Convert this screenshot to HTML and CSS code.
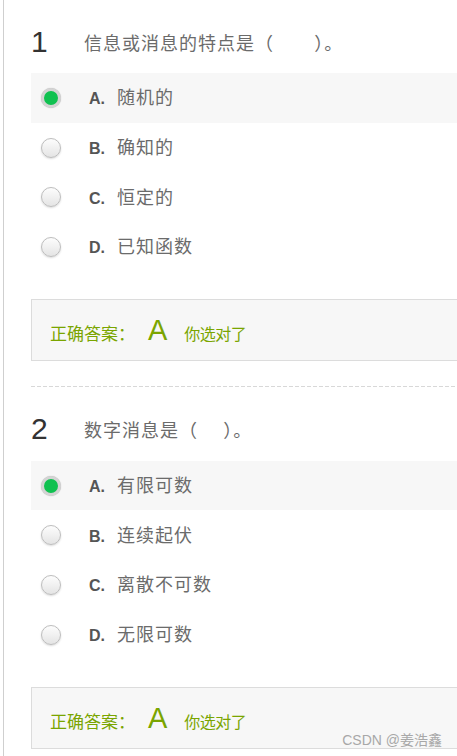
FILE: index.html
```html
<!DOCTYPE html>
<html lang="zh-CN">
<head>
<meta charset="utf-8">
<title>题目</title>
<link rel="stylesheet" href="styles.css">
</head>
<body>
<div class="page">
  <section class="question q1">
    <div class="q-head">
      <span class="q-num">1</span>
      <span class="q-text">信息或消息的特点是（&nbsp;&nbsp;&nbsp;&nbsp;&nbsp;&nbsp;&nbsp;&nbsp;）。</span>
    </div>
    <ul class="options">
      <li class="option selected"><span class="radio"></span><span class="opt-label"><span class="opt-key">A.</span><span class="opt-text">随机的</span></span></li>
      <li class="option"><span class="radio"></span><span class="opt-label"><span class="opt-key">B.</span><span class="opt-text">确知的</span></span></li>
      <li class="option"><span class="radio"></span><span class="opt-label"><span class="opt-key">C.</span><span class="opt-text">恒定的</span></span></li>
      <li class="option"><span class="radio"></span><span class="opt-label"><span class="opt-key">D.</span><span class="opt-text">已知函数</span></span></li>
    </ul>
    <div class="answer">
      <span class="ans-label">正确答案：</span><span class="ans-key">A</span><span class="ans-note">你选对了</span>
    </div>
  </section>
  <div class="divider"></div>
  <section class="question q2">
    <div class="q-head">
      <span class="q-num">2</span>
      <span class="q-text">数字消息是（&nbsp;&nbsp;&nbsp;&nbsp;&nbsp;）。</span>
    </div>
    <ul class="options">
      <li class="option selected"><span class="radio"></span><span class="opt-label"><span class="opt-key">A.</span><span class="opt-text">有限可数</span></span></li>
      <li class="option"><span class="radio"></span><span class="opt-label"><span class="opt-key">B.</span><span class="opt-text">连续起伏</span></span></li>
      <li class="option"><span class="radio"></span><span class="opt-label"><span class="opt-key">C.</span><span class="opt-text">离散不可数</span></span></li>
      <li class="option"><span class="radio"></span><span class="opt-label"><span class="opt-key">D.</span><span class="opt-text">无限可数</span></span></li>
    </ul>
    <div class="answer">
      <span class="ans-label">正确答案：</span><span class="ans-key">A</span><span class="ans-note">你选对了</span>
    </div>
  </section>
  <div class="watermark">CSDN @姜浩鑫</div>
</div>
</body>
</html>
```
FILE: styles.css
```css
html, body {
  margin: 0;
  padding: 0;
  background: #fff;
  overflow: hidden;
}
.page {
  position: relative;
  margin-left: 3px;
  border-left: 1px solid #cfcfcf;
  padding-left: 27px;
  padding-top: 24px;
  height: 732px;
  font-family: "Noto Sans CJK SC", "Liberation Sans", sans-serif;
}
.q-head {
  display: flex;
  align-items: center;
  height: 36px;
}
.q-num {
  width: 53px;
  flex: none;
  font-family: "Liberation Sans", Arial, sans-serif;
  font-size: 30px;
  color: #333;
  line-height: 36px;
}
.q-text {
  font-size: 18px;
  letter-spacing: 1px;
  color: #6b6b6b;
  line-height: 36px;
  white-space: pre;
}
.options {
  list-style: none;
  margin: 13px 0 0 0;
  padding: 0;
}
.q2 .options { margin-top: 14px; }
.option {
  display: flex;
  align-items: center;
  height: 49.7px;
}
.option.selected {
  background: #f7f7f7;
}
.radio {
  flex: none;
  box-sizing: border-box;
  width: 20px;
  height: 20px;
  margin-left: 10px;
  border-radius: 50%;
  border: 1px solid #bdbdbd;
  background: linear-gradient(#fdfdfd, #e4e4e4);
  box-shadow: 0 1px 2px rgba(0,0,0,0.15);
}
.option.selected .radio {
  border: 3px solid #d4d4d4;
  background: #10c150;
  box-shadow: 0 0 1px rgba(0,0,0,0.3);
}
.opt-label {
  margin-left: 28px;
  line-height: 26px;
}
.opt-key {
  display: inline-block;
  width: 28px;
  font-family: "Liberation Sans", Arial, sans-serif;
  font-weight: bold;
  font-size: 16px;
  color: #555;
}
.opt-text {
  font-size: 18px;
  letter-spacing: 1px;
  color: #6b6b6b;
}
.answer {
  display: flex;
  align-items: center;
  box-sizing: border-box;
  height: 62px;
  margin-top: 27px;
  margin-right: -4px;
  padding: 6px 0 0 18px;
  border: 1px solid #dcdcdc;
  background: #f7f7f7;
  color: #7aa500;
}
.ans-label {
  font-size: 17px;
}
.ans-key {
  font-family: "Liberation Sans", Arial, sans-serif;
  font-size: 29px;
  margin-left: 13px;
  line-height: 30px;
  position: relative;
  top: -3px;
}
.ans-note {
  font-size: 16px;
  margin-left: 17px;
  letter-spacing: -0.5px;
}
.divider {
  height: 1px;
  margin-top: 25px;
  background: repeating-linear-gradient(to right, #d8d8d8 0 4px, transparent 4px 6px);
}
.q2 .q-head {
  margin-top: 24px;
}
.watermark {
  position: absolute;
  right: 15px;
  top: 730px;
  font-family: "Liberation Sans", "Noto Sans CJK SC", sans-serif;
  font-size: 14px;
  line-height: 20px;
  color: #a8a8a8;
}
```
